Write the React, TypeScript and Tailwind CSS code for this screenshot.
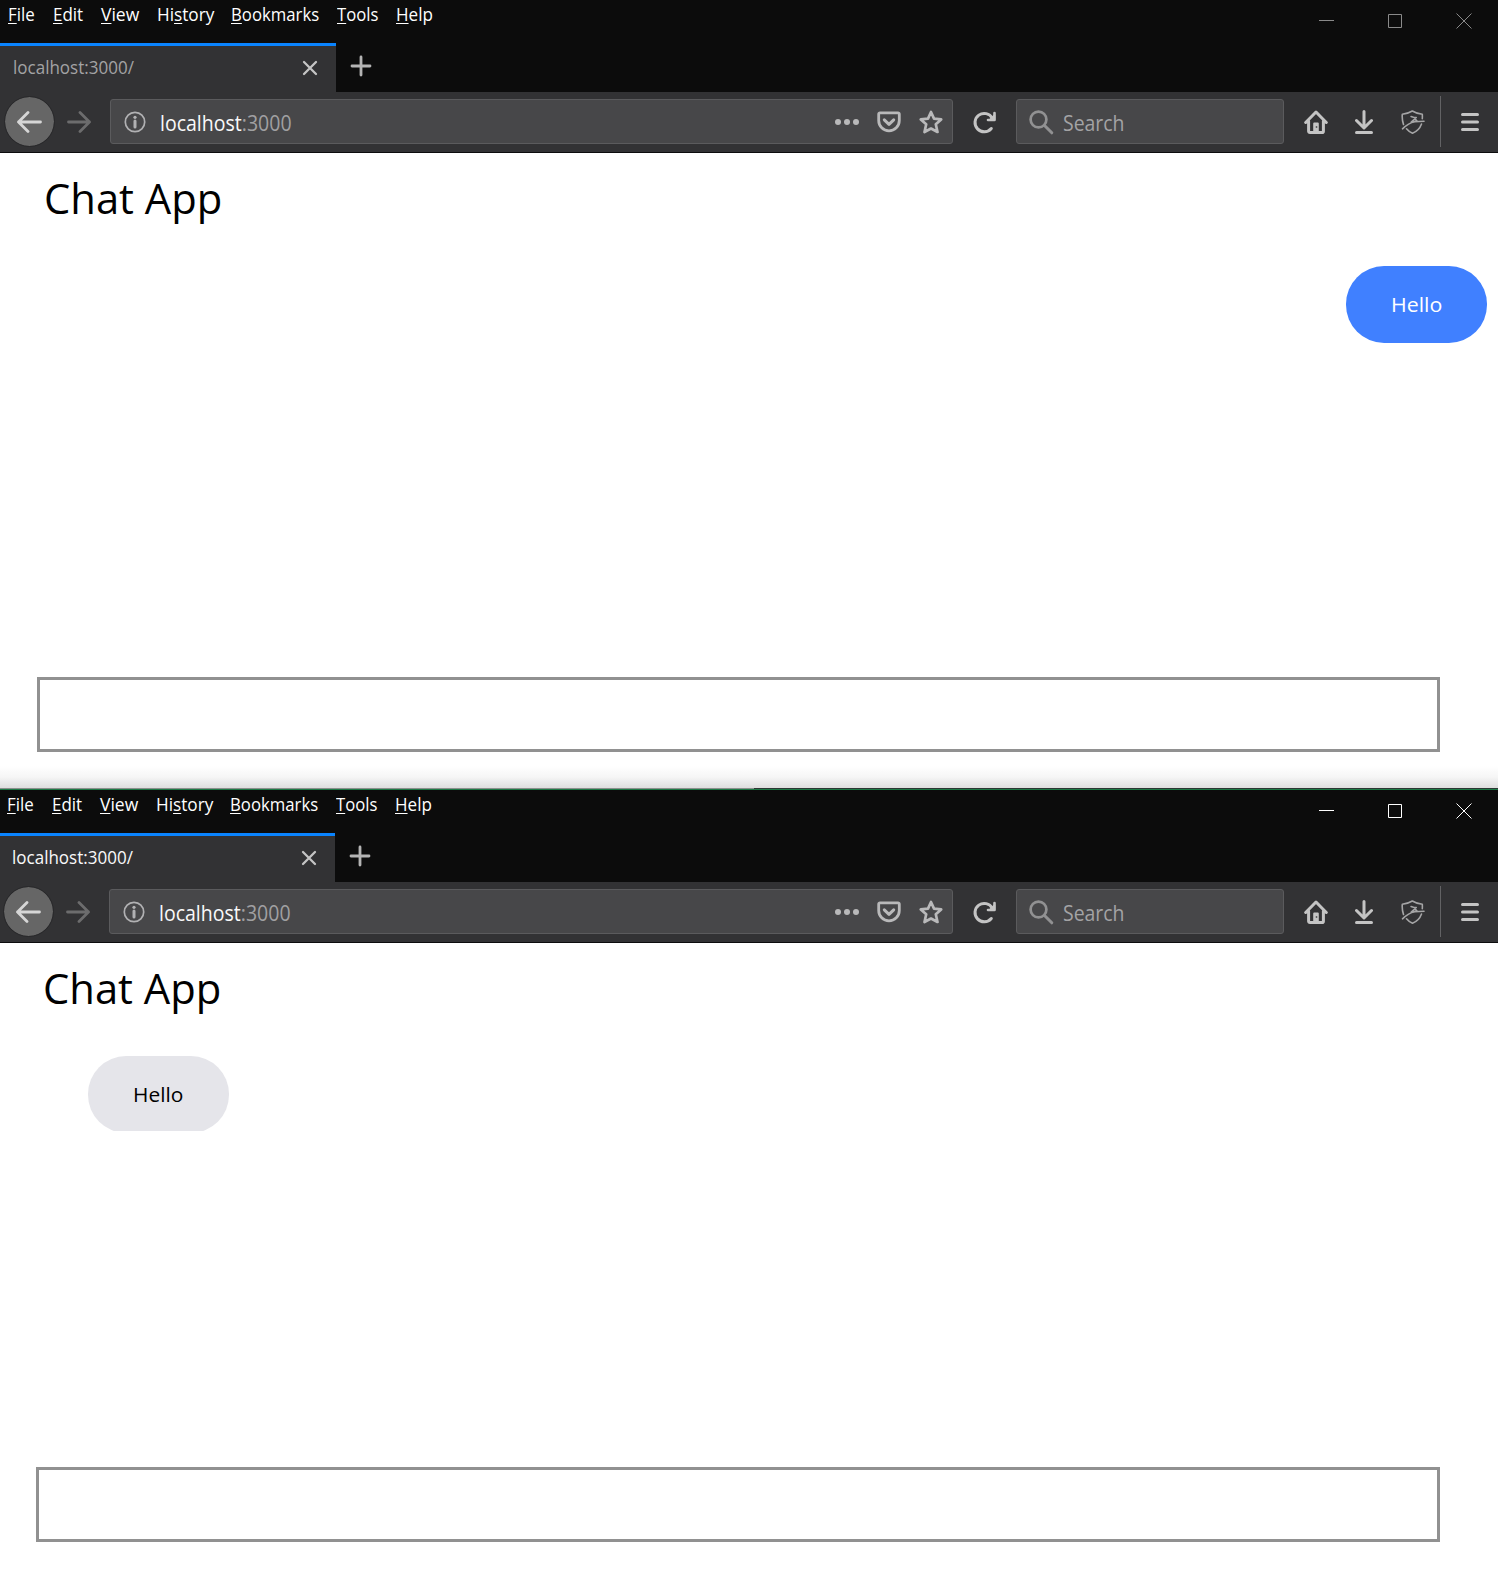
import React, { useLayoutEffect, useRef } from 'react';

/* Text condensed or stretched horizontally to fill its own box. */
function Fit({ className, children }: { className: string; children: React.ReactNode }) {
  const box = useRef<HTMLSpanElement>(null);
  const text = useRef<HTMLSpanElement>(null);
  useLayoutEffect(() => {
    if (!box.current || !text.current) return;
    text.current.style.transform = `scaleX(${box.current.clientWidth / text.current.offsetWidth})`;
  }, []);
  return (
    <span ref={box} className={`block shrink-0 whitespace-nowrap ${className}`}>
      <span ref={text} className="inline-block origin-left">
        {children}
      </span>
    </span>
  );
}

const menus = [
  { pre: '', key: 'F', post: 'ile', box: 'w-[27px] mr-[18px]' },
  { pre: '', key: 'E', post: 'dit', box: 'w-[30px] mr-[18px]' },
  { pre: '', key: 'V', post: 'iew', box: 'w-[38px] mr-[18px]' },
  { pre: 'Hi', key: 's', post: 'tory', box: 'w-[57px] mr-[17px]' },
  { pre: '', key: 'B', post: 'ookmarks', box: 'w-[88px] mr-[18px]' },
  { pre: '', key: 'T', post: 'ools', box: 'w-[41px] mr-[18px]' },
  { pre: '', key: 'H', post: 'elp', box: 'w-[37px]' },
];

function Chrome({ active }: { active: boolean }) {
  return (
    <header className="flex h-[153px] shrink-0 flex-col border-b border-[#0c0c0d] bg-[#0c0c0c]">
      <div className="flex h-[43px] justify-between">
        <nav className={`flex pt-[2px] text-[17.5px] leading-6 text-white ${active ? 'pl-[7px]' : 'pl-2'}`}>
          {menus.map((m) => (
            <Fit key={m.key + m.post} className={m.box}>
              {m.pre}
              <span className="underline decoration-1 underline-offset-[2px] [text-decoration-skip-ink:none]">{m.key}</span>
              {m.post}
            </Fit>
          ))}
        </nav>
        <svg width="179" height="43" fill="none" stroke={active ? '#ffffff' : '#8a8a8a'} strokeWidth="1">
          <path d="M0 20.5h15M69.5 14.5h13v13h-13zM137.5 13.5l15 15M152.5 13.5l-15 15" />
        </svg>
      </div>

      <div className="flex h-[49px]">
        <div className={`flex items-start border-t-[3px] border-[#0a84ff] bg-[#323234] ${active ? 'w-[335px] pl-3' : 'w-[336px] pl-[13px]'}`}>
          <Fit className={`mt-[9px] w-[121px] text-[18px] leading-6 ${active ? 'text-[#f9f9fa]' : 'text-[#a3a3a4]'}`}>localhost:3000/</Fit>
          <svg className="mt-[14px] ml-[168px] shrink-0" width="16" height="16" fill="none" stroke="#c4c4c4" strokeWidth="2.3" strokeLinecap="round">
            <path d="M2 2l12 12M14 2L2 14" />
          </svg>
        </div>
        <svg className="mt-[12px] ml-[14px]" width="22" height="22" fill="none" stroke="#b4b4b4" strokeWidth="2.8" strokeLinecap="round">
          <path d="M11 2v18M2 11h18" />
        </svg>
      </div>

      <div className={`flex h-[60px] items-start bg-[#323234] ${active ? 'pl-1' : 'pl-[5px]'}`}>
        <div className="mt-[5px] flex size-[49px] shrink-0 items-center justify-center rounded-full bg-[#666666] outline outline-[#29292b]">
          <svg width="25" height="24" fill="none" stroke="#d6d6d6" strokeWidth="2.8" strokeLinecap="round" strokeLinejoin="round">
            <path d="M23.5 12H1.500M11 2.500L1.500 12l9.500 9.500" />
          </svg>
        </div>
        <svg className="mt-[18px] ml-[13px] shrink-0" width="24" height="24" fill="none" stroke="#6c6c6d" strokeWidth="2.8" strokeLinecap="round" strokeLinejoin="round">
          <path d="M1.500 12h21M13 2.500l9.500 9.500-9.500 9.500" />
        </svg>

        <div className={`mt-[7px] ml-[19px] flex h-[45px] shrink-0 items-start rounded-[3px] border border-[#5b5b5d] bg-[#474749] ${active ? 'w-[844px]' : 'w-[843px]'}`}>
          <svg className="mt-[11px] ml-[13px] shrink-0" width="22" height="22" fill="none" stroke="#b1b1b3">
            <circle cx="11" cy="11" r="9.700" strokeWidth="1.700" />
            <path d="M11 10v6" strokeWidth="3" strokeLinecap="round" />
            <circle cx="11" cy="6.300" r="1.600" fill="#b1b1b3" stroke="none" />
          </svg>
          <Fit className="mt-[9px] ml-[14px] w-[132px] text-[21px] leading-7 text-[#a0a0a2]">
            <span className="text-[#f9f9fa]">localhost</span>:3000
          </Fit>
          <div className="mt-[10px] mr-[9px] ml-auto flex gap-[18px]">
            <svg width="24" height="24" fill="#b9b9ba">
              <circle cx="3" cy="12" r="3" /><circle cx="12" cy="12" r="3" /><circle cx="21" cy="12" r="3" />
            </svg>
            <svg width="24" height="24" fill="none" stroke="#b9b9ba" strokeLinecap="round" strokeLinejoin="round">
              <path strokeWidth="2.800" d="M3 2.900h18a1.300 1.300 0 0 1 1.300 1.300v6.300a10.300 10.300 0 0 1-20.600 0V4.200A1.300 1.300 0 0 1 3 2.900z" />
              <path strokeWidth="3" d="M7.300 9.800l4.700 4.500 4.700-4.500" />
            </svg>
            <svg width="24" height="24" fill="none" stroke="#b9b9ba" strokeWidth="2.700" strokeLinejoin="round">
              <path d="M12 2l3 6.600 7.200.800-5.400 4.800 1.700 7.800L12 18.500 5.500 22l1.700-7.800L1.800 9.400 9 8.600z" />
            </svg>
          </div>
        </div>

        <svg className="mt-[18px] ml-[20px] shrink-0" width="24" height="24" fill="none" stroke="#c4c4c4" strokeWidth="3" strokeLinecap="round" strokeLinejoin="round">
          <path d="M18.300 18.500A9.200 9.200 0 1 1 19.300 8.200" />
          <path d="M21.500 3v7h-6.500" strokeWidth="2.600" />
          <path d="M21.500 5v5h-5z" fill="#c4c4c4" strokeWidth="1.500" />
        </svg>

        <div className="mt-[7px] ml-[19px] flex h-[45px] w-[268px] shrink-0 rounded-[3px] border border-[#5b5b5d] bg-[#474749]">
          <svg className="mt-[10px] ml-3 shrink-0" width="25" height="25" fill="none" stroke="#919192" strokeWidth="3" strokeLinecap="round">
            <circle cx="9.500" cy="9.500" r="7.900" strokeWidth="2.700" />
            <path d="M15.500 15.500l7.300 7.300" />
          </svg>
          <Fit className="mt-[9px] ml-[9px] w-[62px] text-[21px] leading-7 text-[#a3a3a5]">Search</Fit>
        </div>

        <svg className="mt-[18px] ml-[20px] shrink-0" width="24" height="24" fill="none" stroke="#c4c4c4" strokeWidth="3" strokeLinecap="round" strokeLinejoin="round">
          <path d="M1.700 12.500L12 2l10.300 10.500M4.600 11v10.200a1.300 1.300 0 0 0 1.300 1.300h12.200a1.300 1.300 0 0 0 1.300-1.300V11" />
          <path d="M10.200 13.500h3.600v9h-3.600z" fill="#c4c4c4" strokeWidth="2" />
          <path d="M12.500 16.200v1.600" stroke="#4a4a4b" strokeWidth="1.500" strokeLinecap="butt" />
        </svg>
        <svg className="mt-[18px] ml-[27px] shrink-0" width="18" height="24" fill="none" stroke="#c4c4c4" strokeWidth="3" strokeLinecap="round" strokeLinejoin="round">
          <path d="M9 1.500V17M1.500 10.500L9 18l7.500-7.500M1.500 22.500h15" />
        </svg>
        <svg className="mt-[18px] ml-[28px] shrink-0" width="24" height="24" fill="none" stroke="#a5a5a6" strokeWidth="1.600" strokeLinecap="round" strokeLinejoin="round">
          <path d="M2.500 14.500C1.300 11 1 7.500 1.300 4.200 5 4 8.500 2.700 11.300 1c3 1.800 6.300 3 10 3.200.1 1.500.1 3 0 4.500" />
          <path d="M20.500 14C19 18.200 16 21.500 11.500 23.200 9 22.200 7 20.700 5.500 18.800" />
          <path d="M1.500 18.800C5.500 15 9 12.600 13.500 11.700l9.500-.5" />
          <path d="M10 6.500l2.500.8 2.800.2-2.300 2-2.800 2.600 2.300-.6 3.500-.5-1.300-1.500" strokeWidth="1.500" />
        </svg>
        <div className="mt-1 ml-[15px] h-[51px] w-px shrink-0 bg-[#626264]" />
        <svg className="mt-[20px] ml-[20px] shrink-0" width="18" height="20" fill="none" stroke="#c4c4c4" strokeWidth="3" strokeLinecap="round">
          <path d="M1.500 2.500h15M1.500 10h15M1.500 17.500h15" />
        </svg>
      </div>
    </header>
  );
}

export default function App() {
  return (
    <div className="flex h-[1578px] w-[1498px] flex-col overflow-hidden bg-white font-['Open_Sans',sans-serif]">
      <section className="flex h-[788px] shrink-0 flex-col">
        <Chrome active={false} />
        <h1 className="mt-[17px] ml-[44px] h-14 text-[41.5px] font-[450] leading-14 text-black">
          <Fit className="w-[178px]">Chat App</Fit>
        </h1>
        <div className="mt-[40px] mr-[11px] flex h-[77px] w-[141px] items-start self-end rounded-[38px] bg-[#4080ff] pt-[24px] pl-[45px]">
          <Fit className="w-[51px] text-[20.5px] font-[450] leading-[29px] text-white">Hello</Fit>
        </div>
        <input className="mt-auto mb-[14px] ml-[37px] h-[75px] w-[1403px] shrink-0 border-[3px] border-[#919191] px-3 text-2xl outline-none" />
        <div className="h-[22px] shrink-0 bg-linear-to-b from-white via-[#f6f6f6] to-[#dedede]" />
      </section>
      <div className="flex h-px shrink-0">
        <div className="w-[754px] bg-[#8b8f8d]" />
        <div className="flex-1 bg-[#2c3633]" />
      </div>
      <div className="h-px shrink-0 bg-[#1d7a45]" />
      <section className="flex h-[788px] shrink-0 flex-col">
        <Chrome active />
        <h1 className="mt-[17px] ml-[43px] h-14 text-[41.5px] font-[450] leading-14 text-black">
          <Fit className="w-[178px]">Chat App</Fit>
        </h1>
        <div className="mt-[40px] ml-[88px] h-[75px] overflow-hidden">
          <div className="flex h-[77px] w-[141px] items-start rounded-[38px] bg-[#e5e5ea] pt-[24px] pl-[45px]">
            <Fit className="w-[50px] text-[20.5px] font-[450] leading-[29px] text-black">Hello</Fit>
          </div>
        </div>
        <input className="mt-auto mb-[36px] ml-[36px] h-[75px] w-[1404px] shrink-0 border-[3px] border-[#919191] px-3 text-2xl outline-none" />
      </section>
    </div>
  );
}
